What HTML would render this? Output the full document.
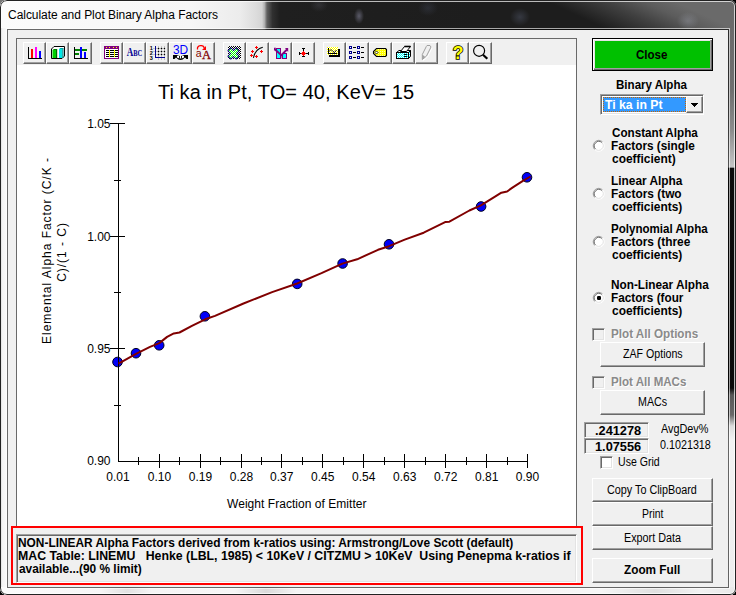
<!DOCTYPE html>
<html>
<head>
<meta charset="utf-8">
<title>Calculate and Plot Binary Alpha Factors</title>
<style>
*{box-sizing:border-box;margin:0;padding:0}
html,body{width:736px;height:595px;overflow:hidden;background:#000}
body{position:relative;font-family:"Liberation Sans",sans-serif;font-size:11px;color:#000}
.abs{position:absolute}
#win{position:absolute;left:0;top:0;width:736px;height:595px;overflow:hidden;background:#fbfbfb;border-radius:7px 6px 6px 7px}
#tbar{left:0;top:0;width:736px;height:30px;
 background:
 radial-gradient(ellipse 5px 8px at 359px 16px,rgba(140,140,165,.55),rgba(120,120,140,0) 100%),
 radial-gradient(ellipse 9px 7px at 319px 5px,rgba(110,110,125,.22),rgba(110,110,125,0) 100%),
 radial-gradient(ellipse 10px 8px at 428px 8px,rgba(90,100,130,.22),rgba(90,100,130,0) 100%),
 radial-gradient(ellipse 10px 9px at 520px 17px,rgba(110,120,150,.3),rgba(110,120,150,0) 100%),
 radial-gradient(ellipse 11px 9px at 688px 21px,rgba(170,175,190,.3),rgba(170,175,190,0) 100%),
 linear-gradient(90deg,#fcfcfc 0px,#f6f6f6 190px,#ececec 240px,#dcdcdc 256px,#d4d4d4 262px,#b0b0b0 264.500px,#606060 267px,#303030 272.500px,#1f1f1f 280px,#1d1d1d 480px,rgba(29,29,29,0) 480px),
 linear-gradient(25deg,#1d1d1d 40%,#404040 58%,#5c5c5c 70%,#6a6a6a 80%) 480px 0/256px 30px no-repeat}
#rframe{left:728px;top:28px;width:8px;height:567px;background:linear-gradient(180deg,#6b6b6b 0px,#6f6f6f 62px,#8c8c8c 102px,#c4c4c4 138px,#c4c4c4 139px,#0c0c0c 140.500px,#0a0a0a 360px,#585858 367px,#686868 387px,#dcdcdc 398px,#f2f2f2 412px,#ededed 567px)}
#bframe{left:0;top:587px;width:736px;height:8px;background:linear-gradient(90deg,#fbfbfb 0,#f6f6f6 100px,#e2e2e2 127px,#f5f5f5 152px,#f6f6f6 235px,#dadada 266px,#f4f4f4 296px,#f6f6f6 600px,#e0e0e0 655px,#f2f2f2 700px,#e8e8e8 736px)}
#lframe{left:0;top:28px;width:8px;height:567px;background:linear-gradient(90deg,#3a3a3a 0,#8a8a8a 1px,#f4f4f4 2.5px,#fcfcfc 8px)}
#edge{left:0;top:0;width:736px;height:595px;border:1px solid #222;border-radius:7px 6px 6px 7px;box-shadow:inset 0 0 0 1px rgba(255,255,255,.7)}
#title{left:8px;top:8px;font-size:12px;line-height:14px;white-space:nowrap;color:#000;letter-spacing:-0.04px}
#client{left:8px;top:30px;width:720px;height:557px;background:#f0f0f0;box-shadow:0 0 0 1px rgba(0,0,0,.58)}
#hl{left:6px;top:28px;width:724px;height:561px;border:1px solid rgba(255,255,255,.62)}
.btn{position:absolute;background:#f0f0f0;border:1px solid;border-color:#fff #696969 #696969 #fff;box-shadow:inset -1px -1px 0 #a0a0a0, inset 1px 1px 0 #f0f0f0;text-align:center;white-space:nowrap;font-size:11px;line-height:13px}
.t{position:absolute;white-space:pre;font-size:12px;line-height:14px;transform-origin:0 0}
.b{font-weight:bold}
.tb{position:absolute;top:42px;width:23px;height:22px;background:#f0f0f0;border:1px solid;border-color:#fff #696969 #696969 #fff;box-shadow:inset -1px -1px 0 #a0a0a0}
.tb svg{position:absolute;left:-1px;top:-1px;width:23px;height:22px}
.chk{position:absolute;width:13px;height:13px;background:#fff;border:1px solid;border-color:#a0a0a0 #fff #fff #a0a0a0;box-shadow:inset 1px 1px 0 #696969, inset -1px -1px 0 #e3e3e3}
.chk.dis{background:#f0f0f0}
.tbx{position:absolute;background:#f0f0f0;border:1px solid;border-color:#a0a0a0 #fff #fff #a0a0a0;box-shadow:inset 1px 1px 0 #696969, inset -1px -1px 0 #e3e3e3;font-weight:bold;font-size:11px;line-height:13px;white-space:nowrap}
</style>
</head>
<body>
<div class="abs" style="left:0;top:0;width:10px;height:10px;background:#777"></div>
<div id="win">
<div id="tbar" class="abs"></div>
<div id="lframe" class="abs"></div>
<div id="rframe" class="abs"></div>
<div id="bframe" class="abs"></div>
<div id="edge" class="abs"></div>
<div id="title" class="abs">Calculate and Plot Binary Alpha Factors</div>
<div id="hl" class="abs"></div>
<div id="client" class="abs"></div>

<!-- chart control -->
<div class="abs" id="chart" style="left:16px;top:38px;width:561px;height:489px;background:#f0f0f0;border:1px solid #696969"></div>
<div class="abs" id="plot" style="left:17px;top:65px;width:559px;height:461px;background:#fff"></div>

<!--TOOLBAR-->
<svg width="0" height="0" style="position:absolute"><defs>
<pattern id="ckb" width="2" height="2" patternUnits="userSpaceOnUse"><rect width="2" height="2" fill="#fff"/><rect width="1" height="1" fill="#000"/><rect x="1" y="1" width="1" height="1" fill="#000"/></pattern>
<pattern id="ckg" width="2" height="2" patternUnits="userSpaceOnUse"><rect width="2" height="2" fill="#fff"/><rect width="1" height="1" fill="#0f0"/><rect x="1" y="1" width="1" height="1" fill="#0f0"/></pattern>
<pattern id="cky" width="2" height="2" patternUnits="userSpaceOnUse"><rect width="2" height="2" fill="#ff0"/><rect width="1" height="1" fill="#fff"/><rect x="1" y="1" width="1" height="1" fill="#fff"/></pattern>
<pattern id="cky2" width="2" height="2" patternUnits="userSpaceOnUse"><rect width="2" height="2" fill="#ff0"/><rect x="1" y="1" width="1" height="1" fill="#ffffa0"/></pattern>
<pattern id="ckc" width="2" height="2" patternUnits="userSpaceOnUse"><rect width="2" height="2" fill="#0ff"/><rect width="1" height="1" fill="#fff"/><rect x="1" y="1" width="1" height="1" fill="#fff"/></pattern>
</defs></svg>
<div class="tb" style="left:23px"><svg viewBox="0 0 23 22" shape-rendering="crispEdges"><rect x="5" y="5" width="1" height="12"/><rect x="5" y="16" width="14" height="1"/><rect x="8" y="7" width="2" height="9" fill="#f00"/><rect x="12" y="5" width="2" height="11" fill="#f0f"/><rect x="16" y="9" width="2" height="7" fill="#00f"/></svg></div>
<div class="tb" style="left:46px"><svg viewBox="0 0 23 22"><path d="M8 4.500H18.500V14L16 16.500H5.500V7Z" fill="#fff" stroke="#000"/><rect x="6.500" y="8" width="3.500" height="8" fill="#00d000"/><rect x="10" y="7" width="1.200" height="9" fill="#006800"/><path d="M6.500 8L8 7H11.200L10 8Z" fill="#008000"/><rect x="13" y="7" width="3.300" height="9" fill="#00e8e8"/><rect x="16.300" y="6" width="1.200" height="10" fill="#008888"/><path d="M13 7L14.500 6H17.500L16.300 7Z" fill="#00a0a0"/></svg></div>
<div class="tb" style="left:69px"><svg viewBox="0 0 23 22" shape-rendering="crispEdges"><rect x="5" y="5" width="1" height="12"/><rect x="5" y="16" width="14" height="1"/><rect x="6" y="7" width="12" height="2" fill="#008000"/><rect x="6" y="11" width="4" height="2" fill="#008000"/><rect x="11" y="5" width="2" height="11" fill="#00f"/><rect x="15" y="10" width="2" height="6" fill="#00f"/></svg></div>

<div class="tb" style="left:100px"><svg viewBox="0 0 23 22" shape-rendering="crispEdges"><rect x="4" y="4" width="15" height="13" fill="#800080"/><rect x="5" y="7" width="13" height="9" fill="#fff"/><g fill="#ff0"><rect x="6" y="5" width="1" height="1"/><rect x="9" y="5" width="1" height="1"/><rect x="13" y="5" width="1" height="1"/><rect x="16" y="5" width="1" height="1"/><rect x="9" y="8" width="1" height="7"/><rect x="14" y="8" width="1" height="7"/></g><g fill="#000"><rect x="6" y="8" width="3" height="1"/><rect x="10" y="8" width="4" height="1"/><rect x="15" y="8" width="3" height="1"/><rect x="6" y="10" width="3" height="1"/><rect x="10" y="10" width="4" height="1"/><rect x="15" y="10" width="3" height="1"/><rect x="6" y="12" width="3" height="1"/><rect x="10" y="12" width="4" height="1"/><rect x="15" y="12" width="3" height="1"/><rect x="6" y="14" width="3" height="1"/><rect x="10" y="14" width="4" height="1"/><rect x="15" y="14" width="3" height="1"/></g></svg></div>
<div class="tb" style="left:123px"><svg viewBox="0 0 23 22" font-family="'Liberation Serif',serif" font-weight="bold" fill="#000090"><text x="3.700" y="13.800" font-size="12px" textLength="6.500" lengthAdjust="spacingAndGlyphs">A</text><text x="10.200" y="13.800" font-size="8px" textLength="9" lengthAdjust="spacingAndGlyphs">BC</text></svg></div>
<div class="tb" style="left:146px"><svg viewBox="0 0 23 22"><g font-family="'Liberation Sans',sans-serif" font-size="5.500px" font-weight="bold" fill="#000"><text x="3.700" y="8">1</text><text x="3.700" y="13">2</text><text x="3.700" y="18">3</text></g><g fill="#c4c4c4" shape-rendering="crispEdges"><rect x="12" y="4" width="1" height="14"/><rect x="15" y="4" width="1" height="14"/><rect x="18" y="4" width="1" height="14"/><rect x="7" y="6" width="12" height="1"/><rect x="7" y="9" width="12" height="1"/><rect x="7" y="12" width="12" height="1"/></g><g fill="#000"><circle cx="12.500" cy="6.500" r="0.700"/><circle cx="15.500" cy="6.500" r="0.700"/><circle cx="18.500" cy="6.500" r="0.700"/><circle cx="12.500" cy="9.500" r="0.700"/><circle cx="15.500" cy="9.500" r="0.700"/><circle cx="18.500" cy="9.500" r="0.700"/><circle cx="12.500" cy="12.500" r="0.700"/><circle cx="15.500" cy="12.500" r="0.700"/><circle cx="18.500" cy="12.500" r="0.700"/></g><path d="M9.500 4V15.500H19" fill="none" stroke="#000090" stroke-width="1" shape-rendering="crispEdges"/></svg></div>
<div class="tb" style="left:169px"><svg viewBox="0 0 23 22"><text x="4" y="12" font-family="'Liberation Sans',sans-serif" font-size="12.500px" fill="#00f" textLength="15.200" lengthAdjust="spacingAndGlyphs">3D</text><path d="M4 13H19V17H17.500L16 15.500Q11.500 20.500 7 15.500L5.500 17H4Z" fill="#000"/><ellipse cx="11.500" cy="14.700" rx="3.600" ry="1.700" fill="#fff"/><path d="M10.500 14V16.500M12.500 14V16.500" stroke="#000" stroke-width="0.900"/></svg></div>
<div class="tb" style="left:192px"><svg viewBox="0 0 23 22"><g fill="#800000"><text x="3.800" y="15" font-family="'Liberation Sans',sans-serif" font-size="10.500px">a</text><text x="10" y="17" font-family="'Liberation Serif',serif" font-size="12.500px" stroke="#800000" stroke-width="0.300">A</text></g><path d="M5.500 7.500C4.800 3 11.500 2.200 12.300 6" fill="none" stroke="#f00" stroke-width="1.300"/><path d="M14 4V8H10Z" fill="#f00"/></svg></div>

<div class="tb" style="left:223px"><svg viewBox="0 0 23 22"><rect x="5" y="4" width="13" height="13" fill="url(#ckb)" shape-rendering="crispEdges"/><path d="M7.800 8.800L13.200 14.200M13.200 8.800L7.800 14.200" stroke="#000080" stroke-width="5" stroke-linecap="square" fill="none"/><path d="M7.800 8.800L13.200 14.200M13.200 8.800L7.800 14.200" stroke="url(#ckg)" stroke-width="3.400" stroke-linecap="square" fill="none"/></svg></div>
<div class="tb" style="left:246px"><svg viewBox="0 0 23 22"><path d="M7.400 15.800C8.500 11 11.500 6.500 16.800 5.300" fill="none" stroke="#000" stroke-width="1.100"/><g fill="#f00" shape-rendering="crispEdges"><path d="M10 4H11V5H12V6H11V7H10V6H9V5H10Z"/><path d="M6 8H7V9H8V10H7V11H6V10H5V9H6Z"/><path d="M15 8H16V9H17V10H16V11H15V10H14V9H15Z"/><path d="M5 12H6V13H7V14H6V15H5V14H4V13H5Z"/><path d="M10 13H11V14H12V15H11V16H10V15H9V14H10Z"/></g></svg></div>
<div class="tb" style="left:269px"><svg viewBox="0 0 23 22"><rect x="7.500" y="6.500" width="4" height="10" fill="#0ff" stroke="#800080"/><rect x="13.500" y="11.500" width="4" height="5" fill="#0ff" stroke="#800080"/><path d="M11.500 12.500H13.500V14H12.500V16.500H11.500Z" fill="#800080"/><path d="M5.500 7L12.300 13.200L18 7.500" fill="none" stroke="#800080" stroke-width="1.900"/><path d="M5 5.800H7L5 9Z" fill="#800080"/><path d="M16 6H19.200V10Z" fill="#800080"/></svg></div>
<div class="tb" style="left:292px"><svg viewBox="0 0 23 22" shape-rendering="crispEdges"><rect x="11" y="6" width="1" height="9"/><rect x="7" y="11" width="10" height="1"/><rect x="10" y="6" width="3" height="1"/><rect x="10" y="14" width="3" height="1"/><rect x="7" y="10" width="1" height="3"/><rect x="16" y="10" width="1" height="3"/><path d="M11 9H12V10H13V11H14V12H13V13H12V14H11V13H10V12H9V11H10V10H11Z" fill="#f00"/></svg></div>

<div class="tb" style="left:323px"><svg viewBox="0 0 23 22"><rect x="6" y="7" width="11" height="8" fill="#000" shape-rendering="crispEdges"/><rect x="4" y="5" width="11" height="8" fill="url(#cky)" shape-rendering="crispEdges"/><path d="M5.500 6V11.500H14" fill="none" stroke="#000" shape-rendering="crispEdges"/><path d="M6 9.500L8 7.500L10 9.500L11.500 10.500L13.500 8" fill="none" stroke="#000" stroke-width="0.900"/></svg></div>
<div class="tb" style="left:346px"><svg viewBox="0 0 23 22" shape-rendering="crispEdges"><g fill="#000090"><rect x="3" y="4" width="3" height="3"/><rect x="11" y="4" width="3" height="3"/><rect x="3" y="9" width="3" height="3"/><rect x="11" y="9" width="3" height="3"/><rect x="3" y="14" width="3" height="3"/><rect x="11" y="14" width="3" height="3"/></g><g fill="#fff"><rect x="4" y="5" width="1" height="1"/><rect x="12" y="5" width="1" height="1"/><rect x="4" y="10" width="1" height="1"/><rect x="12" y="10" width="1" height="1"/><rect x="4" y="15" width="1" height="1"/><rect x="12" y="15" width="1" height="1"/></g><g fill="#000"><rect x="7" y="5" width="3" height="1"/><rect x="15" y="5" width="3" height="1"/><rect x="7" y="10" width="3" height="1"/><rect x="15" y="10" width="3" height="1"/><rect x="7" y="15" width="3" height="1"/><rect x="15" y="15" width="3" height="1"/></g></svg></div>
<div class="tb" style="left:369px"><svg viewBox="0 0 23 22"><path d="M7.500 6.500H16.500L17.500 7.500V13.500L16.500 14.500H7.500L4.500 11.500V9.500Z" fill="url(#cky2)" stroke="#000" stroke-width="1.100"/><path d="M7.500 9L9 10.500L7.500 12L6 10.500Z" fill="#fff" stroke="#000" stroke-width="0.800"/></svg></div>
<div class="tb" style="left:392px"><svg viewBox="0 0 23 22"><path d="M4.500 10.500L7 8.500H18.500L16.500 10.500Z" fill="#e8ffff" stroke="#000"/><path d="M16.500 10.500L18.500 8.500V14.500L16.500 16.500Z" fill="url(#ckc)" stroke="#000"/><rect x="4.500" y="10.500" width="12" height="6" fill="url(#ckc)" stroke="#000"/><path d="M8.500 9.500L12.500 4.500H18.500L14.500 9.500Z" fill="#fff" stroke="#000"/><path d="M12.500 4.500H18.500" stroke="#000" stroke-width="1.600"/><rect x="12" y="12" width="3" height="1" fill="#000"/><rect x="12" y="14" width="3" height="1" fill="#000"/></svg></div>
<div class="tb" style="left:415px"><svg viewBox="0 0 23 22"><path d="M13 4.500H16L17 6L12.500 15L8.300 18.500V13.500L12.300 5.500Z" fill="none" stroke="#fff"/><path d="M12 3.500H15L16 5L11.500 14L7.300 17.500V12.500L11.300 4.500Z" fill="#f0f0f0" stroke="#a0a0a0"/><path d="M7.300 12.500L10 14.800L7.300 17.500Z" fill="#a0a0a0"/></svg></div>

<div class="tb" style="left:446px"><svg viewBox="0 0 23 22"><text x="12" y="16.800" text-anchor="middle" font-family="'Liberation Sans',sans-serif" font-weight="bold" font-size="17.500px" fill="#ff0" stroke="#000" stroke-width="1.600" paint-order="stroke">?</text></svg></div>
<div class="tb" style="left:469px"><svg viewBox="0 0 23 22"><circle cx="10.100" cy="8.800" r="5.500" fill="none" stroke="#000" stroke-width="1.200"/><path d="M14 12.800L18.300 16.800" stroke="#000" stroke-width="2.200"/></svg></div>
<!--/TOOLBAR-->

<!--PLOT-->
<svg class="abs" style="left:0;top:0" width="736" height="595" viewBox="0 0 736 595" font-family="'Liberation Sans',sans-serif" fill="#000">
<g font-size="12px" text-anchor="end">
<text x="110.500" y="128">1.05</text>
<text x="110.500" y="240.800">1.00</text>
<text x="110.500" y="352.500">0.95</text>
<text x="110.500" y="464.700">0.90</text>
</g>
<g font-size="12px" text-anchor="middle">
<text x="118" y="481">0.01</text>
<text x="159.500" y="481">0.10</text>
<text x="200.500" y="481">0.19</text>
<text x="241.500" y="481">0.28</text>
<text x="281.800" y="481">0.37</text>
<text x="322.800" y="481">0.45</text>
<text x="363.800" y="481">0.54</text>
<text x="404.800" y="481">0.63</text>
<text x="445.800" y="481">0.72</text>
<text x="486.800" y="481">0.81</text>
<text x="527.500" y="481">0.90</text>
</g>
<text x="286" y="98.500" font-size="20px" text-anchor="middle" letter-spacing="0.07">Ti ka in Pt, TO= 40, KeV= 15</text>
<text x="296.800" y="508" font-size="12px" text-anchor="middle" letter-spacing="0.04">Weight Fraction of Emitter</text>
<text transform="translate(51 250.500) rotate(-90)" font-size="12px" text-anchor="middle" letter-spacing="0.97">Elemental Alpha Factor (C/K -</text>
<text transform="translate(65.500 252) rotate(-90)" font-size="12px" text-anchor="middle" letter-spacing="0.97">C)/(1 - C)</text>
<g fill="#0000f8" stroke="#000020" stroke-width="1">
<circle cx="117.500" cy="362" r="4.800"/>
<circle cx="136" cy="353.200" r="4.800"/>
<circle cx="159.200" cy="345.300" r="4.800"/>
<circle cx="204.900" cy="316.300" r="4.800"/>
<circle cx="297.200" cy="283.900" r="4.800"/>
<circle cx="342.600" cy="263.500" r="4.800"/>
<circle cx="389" cy="244.300" r="4.800"/>
<circle cx="481.100" cy="206.500" r="4.800"/>
<circle cx="527" cy="177.300" r="4.800"/>
</g>
<g shape-rendering="crispEdges" stroke="#000" stroke-width="1" fill="none">
<path d="M118.500 123V462M118 461.500H528"/>
<path d="M110 123.500H125M110 236.500H125M110 348.500H125"/>
<path d="M114 180.500H121M114 292.500H121M114 405.500H121"/>
<path d="M159.500 454V468M200.500 454V468M241.500 454V468M281.500 454V468M322.500 454V468M363.500 454V468M404.500 454V468M445.500 454V468M486.500 454V468M527.500 454V468"/>
<path d="M138.500 457V465M179.500 457V465M220.500 457V465M261.500 457V465M302.500 457V465M343.500 457V465M384.500 457V465M425.500 457V465M466.500 457V465M507.500 457V465"/>
</g>
<polyline fill="none" stroke="#800000" stroke-width="2" stroke-linejoin="round" points="118.500,363.600 136,353.800 150,346.900 159.300,343.100 167.100,336.900 173.800,333.400 179.500,332.500 191.900,325.900 205.200,319.300 215,315.900 243.500,303.500 272.100,292.100 297.200,283.500 321.500,273.100 342.400,263.600 357.100,259.300 378,249.800 389.100,246.200 404.700,239.600 423.700,232.700 445.600,221.900 449.400,221.700 469.400,210.500 480.900,205.400 493.800,197.400 501.400,192.700 507.100,191.500 512.800,187.400 523.300,180.700 530.500,176.500"/>
</svg>
<!--/PLOT-->

<!--RIGHT-->
<div class="abs" style="left:592px;top:38px;width:121px;height:33px;background:#00c000;border:1px solid #000;box-shadow:inset 1px 1px 0 #fff, inset -1px -1px 0 #696969, inset -2px -2px 0 #a0a0a0, inset 2px 2px 0 #e3e3e3"></div>
<div class="abs" style="left:600px;top:94px;width:104px;height:21px;background:#fff;border:1px solid;border-color:#a0a0a0 #fff #fff #a0a0a0;box-shadow:inset 1px 1px 0 #696969, inset -1px -1px 0 #e3e3e3"></div>
<div class="abs" style="left:603px;top:97px;width:83px;height:15px;background:#3399ff;outline:1px dotted #c86400;outline-offset:-1px"></div>
<div class="abs" style="left:686px;top:96px;width:17px;height:17px;background:#f0f0f0;border:1px solid;border-color:#fff #696969 #696969 #fff;box-shadow:inset -1px -1px 0 #a0a0a0"></div>
<svg class="abs" style="left:691px;top:103px" width="7" height="4" viewBox="0 0 7 4" shape-rendering="crispEdges"><path d="M0 0H7V1H6V2H5V3H4V4H3V3H2V2H1V1H0Z" fill="#000"/></svg>

<svg class="abs" style="left:0;top:0" width="736" height="595" viewBox="0 0 736 595">

<g transform="translate(598.700 145.800)"><circle r="5" fill="#fff"/><path d="M-3.89 3.89A5.5 5.5 0 0 1 3.89 -3.89" fill="none" stroke="#a8a8a8" stroke-width="1"/><path d="M3.89 -3.89A5.5 5.5 0 0 1 -3.89 3.89" fill="none" stroke="#fff" stroke-width="1"/><path d="M-3.18 3.18A4.5 4.5 0 0 1 3.18 -3.18" fill="none" stroke="#5c5c5c" stroke-width="1"/><path d="M3.18 -3.18A4.5 4.5 0 0 1 -3.18 3.18" fill="none" stroke="#e3e3e3" stroke-width="1"/></g>
<g transform="translate(598.700 193.800)"><circle r="5" fill="#fff"/><path d="M-3.89 3.89A5.5 5.5 0 0 1 3.89 -3.89" fill="none" stroke="#a8a8a8" stroke-width="1"/><path d="M3.89 -3.89A5.5 5.5 0 0 1 -3.89 3.89" fill="none" stroke="#fff" stroke-width="1"/><path d="M-3.18 3.18A4.5 4.5 0 0 1 3.18 -3.18" fill="none" stroke="#5c5c5c" stroke-width="1"/><path d="M3.18 -3.18A4.5 4.5 0 0 1 -3.18 3.18" fill="none" stroke="#e3e3e3" stroke-width="1"/></g>
<g transform="translate(598.700 241.800)"><circle r="5" fill="#fff"/><path d="M-3.89 3.89A5.5 5.5 0 0 1 3.89 -3.89" fill="none" stroke="#a8a8a8" stroke-width="1"/><path d="M3.89 -3.89A5.5 5.5 0 0 1 -3.89 3.89" fill="none" stroke="#fff" stroke-width="1"/><path d="M-3.18 3.18A4.5 4.5 0 0 1 3.18 -3.18" fill="none" stroke="#5c5c5c" stroke-width="1"/><path d="M3.18 -3.18A4.5 4.5 0 0 1 -3.18 3.18" fill="none" stroke="#e3e3e3" stroke-width="1"/></g>
<g transform="translate(598.700 297.800)"><circle r="5" fill="#fff"/><path d="M-3.89 3.89A5.5 5.5 0 0 1 3.89 -3.89" fill="none" stroke="#a8a8a8" stroke-width="1"/><path d="M3.89 -3.89A5.5 5.5 0 0 1 -3.89 3.89" fill="none" stroke="#fff" stroke-width="1"/><path d="M-3.18 3.18A4.5 4.5 0 0 1 3.18 -3.18" fill="none" stroke="#5c5c5c" stroke-width="1"/><path d="M3.18 -3.18A4.5 4.5 0 0 1 -3.18 3.18" fill="none" stroke="#e3e3e3" stroke-width="1"/></g>
<rect x="597" y="296" width="4" height="4" rx="1.200" fill="#000"/>
</svg>

<div class="chk dis" style="left:592px;top:328px"></div>
<div class="btn" style="left:600px;top:342px;width:105px;height:25px"></div>
<div class="chk dis" style="left:592px;top:376px"></div>
<div class="btn" style="left:600px;top:390px;width:105px;height:25px"></div>
<div class="tbx" style="left:584px;top:422px;width:65px;height:16px"></div>
<div class="tbx" style="left:584px;top:438px;width:65px;height:16px"></div>
<div class="chk" style="left:600px;top:456px"></div>
<div class="btn" style="left:592px;top:478px;width:121px;height:24px"></div>
<div class="btn" style="left:592px;top:502px;width:121px;height:24px"></div>
<div class="btn" style="left:592px;top:526px;width:121px;height:24px"></div>
<div class="btn" style="left:592px;top:558px;width:121px;height:25px"></div>
<span class="t b" style="left:636.4px;top:48px;transform:scaleX(0.963);">Close</span>
<span class="t b" style="left:616.0px;top:78px;transform:scaleX(0.964);">Binary Alpha</span>
<span class="t b" style="left:605.3px;top:98px;transform:scaleX(1.019);color:#fff">Ti ka in Pt</span>
<span class="t b" style="left:611.7px;top:126px;transform:scaleX(0.972);">Constant Alpha</span>
<span class="t b" style="left:610.7px;top:139px;transform:scaleX(0.982);">Factors (single</span>
<span class="t b" style="left:611.7px;top:152px;transform:scaleX(0.994);">coefficient)</span>
<span class="t b" style="left:610.7px;top:174px;transform:scaleX(0.989);">Linear Alpha</span>
<span class="t b" style="left:610.7px;top:187px;transform:scaleX(0.990);">Factors (two</span>
<span class="t b" style="left:611.7px;top:200px;transform:scaleX(0.994);">coefficients)</span>
<span class="t b" style="left:610.7px;top:222px;transform:scaleX(0.964);">Polynomial Alpha</span>
<span class="t b" style="left:610.7px;top:235px;transform:scaleX(0.991);">Factors (three</span>
<span class="t b" style="left:611.7px;top:248px;transform:scaleX(0.994);">coefficients)</span>
<span class="t b" style="left:610.7px;top:278px;transform:scaleX(0.982);">Non-Linear Alpha</span>
<span class="t b" style="left:610.7px;top:291px;transform:scaleX(0.978);">Factors (four</span>
<span class="t b" style="left:611.7px;top:304px;transform:scaleX(0.994);">coefficients)</span>
<span class="t b" style="left:611.4px;top:327px;transform:scaleX(0.973);color:#8a8a8a;text-shadow:1px 1px 0 #fff">Plot All Options</span>
<span class="t" style="left:622.9px;top:347px;transform:scaleX(0.885);">ZAF Options</span>
<span class="t b" style="left:611.4px;top:375px;transform:scaleX(0.964);color:#8a8a8a;text-shadow:1px 1px 0 #fff">Plot All MACs</span>
<span class="t" style="left:637.6px;top:395px;transform:scaleX(0.890);">MACs</span>
<span class="t b" style="left:595.2px;top:424px;transform:scaleX(1.064);">.241278</span>
<span class="t b" style="left:595.2px;top:440px;transform:scaleX(1.064);">1.07556</span>
<span class="t" style="left:660.9px;top:422px;transform:scaleX(0.904);">AvgDev%</span>
<span class="t" style="left:659.6px;top:438px;transform:scaleX(0.896);">0.1021318</span>
<span class="t" style="left:617.6px;top:455px;transform:scaleX(0.880);">Use Grid</span>
<span class="t" style="left:607.3px;top:483px;transform:scaleX(0.900);">Copy To ClipBoard</span>
<span class="t" style="left:641.6px;top:507px;transform:scaleX(0.867);">Print</span>
<span class="t" style="left:623.5px;top:531px;transform:scaleX(0.900);">Export Data</span>
<span class="t b" style="left:623.8px;top:563px;transform:scaleX(0.982);">Zoom Full</span>
<!--/RIGHT-->

<!--BOTTOM-->
<div class="abs" style="left:11px;top:526px;width:572px;height:59px;background:#f0f0f0;border:2px solid #f00"></div>
<div class="abs" style="left:16px;top:534px;width:561px;height:49px;background:#f0f0f0;border:1px solid;border-color:#a0a0a0 #fff #fff #a0a0a0;box-shadow:inset 1px 1px 0 #696969, inset -1px -1px 0 #e3e3e3"></div>
<span class="t b" style="left:18.4px;top:536px;transform:scaleX(0.991)">NON-LINEAR Alpha Factors derived from k-ratios using: Armstrong/Love Scott (default)</span>
<span class="t b" style="left:18.4px;top:549px;transform:scaleX(1.026)">MAC Table: LINEMU   Henke (LBL, 1985) &lt; 10KeV / CITZMU &gt; 10KeV  Using Penepma k-ratios if</span>
<span class="t b" style="left:18.6px;top:562px;transform:scaleX(0.989)">available...(90 % limit)</span>
<!--/BOTTOM-->

</div>
</body>
</html>
